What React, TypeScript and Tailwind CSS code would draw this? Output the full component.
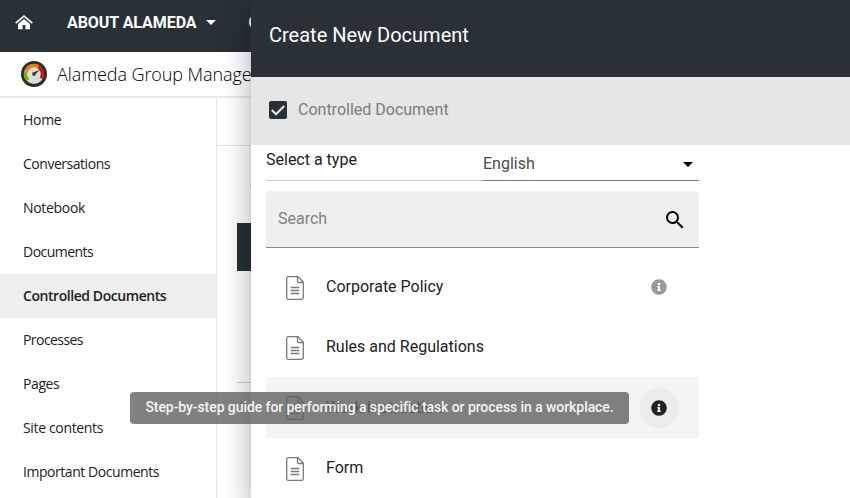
import React from "react";
import { FaInfoCircle } from "react-icons/fa";
import { MdSearch } from "react-icons/md";

const links = [
  { label: "Home", style: "tracking-[-0.3px]" },
  { label: "Conversations", style: "tracking-[-0.47px]" },
  { label: "Notebook", style: "tracking-[-0.31px]" },
  { label: "Documents", style: "tracking-[-0.53px]" },
  { label: "Controlled Documents", style: "tracking-[-0.44px]", active: true },
  { label: "Processes", style: "tracking-[-0.56px]" },
  { label: "Pages", style: "tracking-[-0.4px]" },
  { label: "Site contents", style: "tracking-[-0.34px]" },
  { label: "Important Documents", style: "tracking-[-0.45px]" },
];

const types = [
  { label: "Corporate Policy", info: true },
  { label: "Rules and Regulations" },
  { label: "Work Instruction", info: true, hovered: true },
  { label: "Form" },
];

function HomeIcon() {
  return (
    <svg width="18" height="15" viewBox="0 0 18 15" fill="none">
      <path d="M9 4 3 9.1V14.3H7.6V10h2.8v4.3H15V9.1Z" fill="#fff" />
      <path d="M.7 8.2 9 1.2 17.3 8.2" stroke="#fff" strokeWidth="1.7" />
    </svg>
  );
}

function Gauge() {
  return (
    <svg width="28" height="28" viewBox="0 0 28 28" fill="none">
      <circle cx="14" cy="14" r="13" fill="#2b2b2b" />
      <circle cx="14" cy="14" r="10" fill="#dcdcdc" />
      <path d="M8 20.2A8.5 8.5 0 0 1 5.9 11.6" stroke="#7eaa12" strokeWidth="3.4" />
      <path d="M5.9 11.6A8.5 8.5 0 0 1 18.3 6.7" stroke="#e8800f" strokeWidth="3.6" />
      <path d="M18.3 6.7A8.5 8.5 0 0 1 21.2 18.4" stroke="#c41616" strokeWidth="3.4" />
      <path d="m13.2 12.6 6.8-2.8-5.2 5Z" fill="#333" />
      <circle cx="14" cy="14" r="1.9" fill="#444" />
    </svg>
  );
}

function DocIcon() {
  return (
    <svg width="18" height="24" viewBox="0 0 18 24" fill="none" stroke="#7a7a7a" strokeWidth="1.3">
      <path d="M2.2.7h9.8l5.3 5.3v15.8a1.5 1.5 0 0 1-1.5 1.5H2.2a1.5 1.5 0 0 1-1.5-1.5V2.2A1.5 1.5 0 0 1 2.2.7Z" />
      <path d="M11.5.9v4.6a1 1 0 0 0 1 1H17M4.7 11.5h8.6M4.7 14.5h8.6M4.7 17.5h8.6" />
    </svg>
  );
}

export default function App() {
  return (
    <div className="relative h-[498px] w-[850px] overflow-hidden bg-white font-['Roboto',sans-serif] text-[#212121]">
      <header className="flex h-[52px] items-center bg-[#293136] pl-[15px] pb-[7px] text-white">
        <HomeIcon />
        <span className="ml-[34px] whitespace-nowrap text-[16px] font-bold tracking-[-0.06px]">ABOUT ALAMEDA</span>
        <span className="ml-[9px] h-0 w-0 border-x-[5px] border-t-[5px] border-x-transparent border-t-white" />
        <span className="ml-[33px] text-[16px] font-bold">C</span>
      </header>
      <div className="flex h-[46px] items-center border-b-2 border-[#e9e9e9] pl-[20px] font-['Open_Sans',sans-serif]">
        <Gauge />
        <span className="ml-[9px] whitespace-nowrap text-[18px] font-light tracking-[-0.08px] text-black">Alameda Group Manage</span>
      </div>
      <div className="flex h-[400px]">
        <nav className="w-[217px] shrink-0 border-r border-[#e4e4e4] font-['Open_Sans',sans-serif] text-[14px]">
          {links.map((l) => (
            <div
              key={l.label}
              className={`flex h-[44px] items-center whitespace-nowrap pb-[2px] pl-[23px] ${l.style} ${l.active ? "bg-[#efefef] font-semibold" : "font-normal"}`}
            >
              {l.label}
            </div>
          ))}
        </nav>
        <main className="flex flex-1 flex-col">
          <div className="h-[48px] border-b border-[#e4e4e4]" />
          <div className="ml-[33px] mt-[36px] h-[7px] w-3 rounded-full bg-[#eeee90]" />
          <div className="ml-[20px] mt-[34px] h-[48px] bg-[#293136]" />
          <div className="ml-[20px] mt-[111px] h-px bg-[#cfcfcf]" />
        </main>
      </div>

      <aside className="absolute left-[251px] top-0 h-[498px] w-[599px] bg-white shadow-[0_8px_10px_-5px_rgba(0,0,0,0.2),0_16px_24px_2px_rgba(0,0,0,0.14),0_6px_30px_5px_rgba(0,0,0,0.12)]">
        <div className="flex h-[77px] items-center bg-[#293136] pb-[7px] pl-[18px] text-[20px] text-white">Create New Document</div>
        <div className="flex h-[68px] items-center bg-[#e6e6e6] pl-[18px]">
          <span className="mb-[2px] flex h-[18px] w-[18px] items-center justify-center rounded-[2px] bg-[#293136]">
            <svg width="16" height="14" viewBox="0 0 16 14" fill="none">
              <path d="m1.8 7 4.2 4.2 8.2-8.2" stroke="#e6e6e6" strokeWidth="2.1" />
            </svg>
          </span>
          <span className="ml-[11px] pb-[2px] text-[16px] text-[#7c7c7c]">Controlled Document</span>
        </div>
        <div className="ml-[15px] w-[433px]">
          <div className="flex h-[36px] text-[16px]">
            <div className="w-[217px] border-b border-[#d0d0d0] pt-[3px]">Select a type</div>
            <div className="flex flex-1 items-center justify-between border-b border-[#777] pr-[6px] pt-[2px] text-[#4a4a4a]">
              English
              <span className="mt-px h-0 w-0 border-x-[5px] border-t-[5px] border-x-transparent border-t-black" />
            </div>
          </div>
          <div className="mt-[10px] flex h-[57px] items-center justify-between rounded-t-[4px] border-b border-[#8c8c8c] bg-[#efefef] pl-[12px] pr-[12px] text-[16px] text-[#808080]">
            <span className="pb-px">Search</span>
            <span className="pt-px"><MdSearch size={24} color="#000" /></span>
          </div>
          <div className="mt-[9px] text-[16px]">
            {types.map((t) => (
              <div
                key={t.label}
                className={`flex items-center px-[20px] ${t.hovered ? "h-[61px] bg-[#f4f4f4]" : "h-[60px]"}`}
              >
                <span className="pt-px"><DocIcon /></span>
                <span className="ml-[22px] flex-1">{t.label}</span>
                {t.info && (
                  <span
                    className={`flex h-[40px] w-[40px] items-center justify-center rounded-full ${t.hovered ? "bg-[#ececec] text-[#212121]" : "text-[#999]"}`}
                  >
                    <FaInfoCircle size={16} />
                  </span>
                )}
              </div>
            ))}
          </div>
        </div>
      </aside>

      <div className="absolute left-[130px] top-[392px] flex h-[32px] w-[499px] items-center justify-center whitespace-nowrap rounded-[4px] bg-[#616161]/80 pb-px text-[14px] font-medium tracking-[-0.075px] text-[#f5f5f5]">
        Step-by-step guide for performing a specific task or process in a workplace.
      </div>
    </div>
  );
}
